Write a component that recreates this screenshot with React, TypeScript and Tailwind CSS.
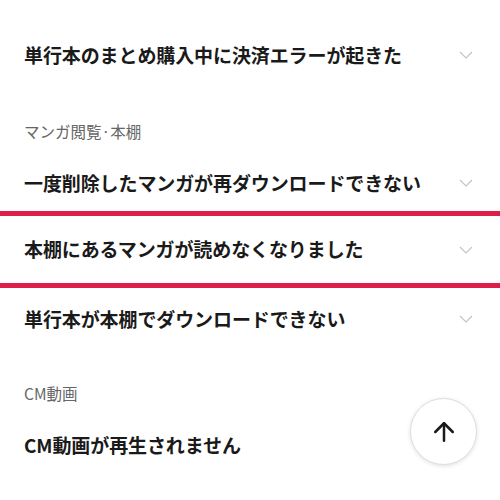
import { ArrowUp } from 'lucide-react';

const font = { fontFamily: '"Noto Sans CJK JP", "Noto Sans", sans-serif' };

function Chevron() {
  return (
    <svg width="14" height="8" viewBox="0 0 14 8" fill="none" className="shrink-0">
      <polyline points="1,1 7,7 13,1" stroke="#c4c4c4" strokeWidth="1.2" />
    </svg>
  );
}

function Row({ title, chevron = true, className = '' }: { title: string; chevron?: boolean; className?: string }) {
  return (
    <div className={`flex items-center justify-between pl-6 pr-[27px] ${className}`}>
      <span className="text-[19px] font-bold text-[#1a1a1a] tracking-[-0.1px]">{title}</span>
      {chevron && <Chevron />}
    </div>
  );
}

function SectionHeader({ label, className = '' }: { label: string; className?: string }) {
  return (
    <div className={`px-6 text-[15.5px] leading-5 text-[#666666] ${className}`}>{label}</div>
  );
}

export default function App() {
  return (
    <div className="relative w-[500px] h-[500px] overflow-hidden bg-white" style={font}>
      <div className="flex flex-col pt-[22px]">
        <Row title="単行本のまとめ購入中に決済エラーが起きた" className="h-[66px]" />
        <SectionHeader label="マンガ閲覧·本棚" className="pt-[33px] pb-[8px]" />
        <Row title="一度削除したマンガが再ダウンロードできない" className="h-[62px] pt-1.5" />
        <Row
          title="本棚にあるマンガが読めなくなりました"
          className="h-[77px] border-y-[5px] border-[#dc1e4b]"
        />
        <Row title="単行本が本棚でダウンロードできない" className="h-[62px]" />
        <SectionHeader label="CM動画" className="pt-[33px] pb-[11px]" />
        <Row title="CM動画が再生されません" chevron={false} className="h-[62px]" />
      </div>

      <button className="absolute left-[410px] top-[398px] w-[67px] h-[67px] rounded-full bg-white border border-[#dedede] shadow-[0_1px_4px_rgba(0,0,0,0.12)] flex items-center justify-center">
        <ArrowUp size={30} strokeWidth={2} color="#1a1a1a" />
      </button>
    </div>
  );
}
